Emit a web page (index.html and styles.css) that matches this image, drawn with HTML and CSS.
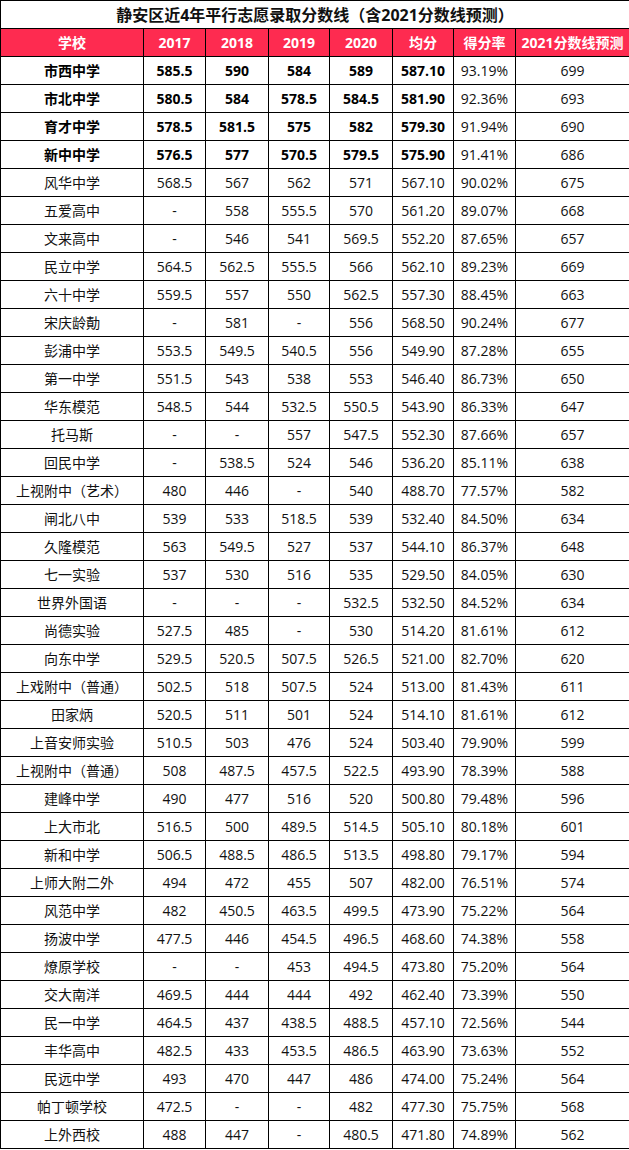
FILE: index.html
```html
<!DOCTYPE html>
<html lang="zh">
<head>
<meta charset="utf-8">
<title>静安区近4年平行志愿录取分数线</title>
<link rel="stylesheet" href="styles.css">
</head>
<body>
<table class="scores">
<colgroup>
<col class="c-school"><col class="c-y17"><col class="c-y18"><col class="c-y19"><col class="c-y20"><col class="c-avg"><col class="c-rate"><col class="c-pred">
</colgroup>
<thead>
<tr class="title-row"><th colspan="8">静安区近4年平行志愿录取分数线（含2021分数线预测）</th></tr>
<tr class="head-row"><th>学校</th><th>2017</th><th>2018</th><th>2019</th><th>2020</th><th>均分</th><th>得分率</th><th>2021分数线预测</th></tr>
</thead>
<tbody>
<tr class="top"><td>市西中学</td><td>585.5</td><td>590</td><td>584</td><td>589</td><td>587.10</td><td class="n">93.19%</td><td class="n">699</td></tr>
<tr class="top"><td>市北中学</td><td>580.5</td><td>584</td><td>578.5</td><td>584.5</td><td>581.90</td><td class="n">92.36%</td><td class="n">693</td></tr>
<tr class="top"><td>育才中学</td><td>578.5</td><td>581.5</td><td>575</td><td>582</td><td>579.30</td><td class="n">91.94%</td><td class="n">690</td></tr>
<tr class="top"><td>新中中学</td><td>576.5</td><td>577</td><td>570.5</td><td>579.5</td><td>575.90</td><td class="n">91.41%</td><td class="n">686</td></tr>
<tr><td>风华中学</td><td>568.5</td><td>567</td><td>562</td><td>571</td><td>567.10</td><td>90.02%</td><td>675</td></tr>
<tr><td>五爱高中</td><td>-</td><td>558</td><td>555.5</td><td>570</td><td>561.20</td><td>89.07%</td><td>668</td></tr>
<tr><td>文来高中</td><td>-</td><td>546</td><td>541</td><td>569.5</td><td>552.20</td><td>87.65%</td><td>657</td></tr>
<tr><td>民立中学</td><td>564.5</td><td>562.5</td><td>555.5</td><td>566</td><td>562.10</td><td>89.23%</td><td>669</td></tr>
<tr><td>六十中学</td><td>559.5</td><td>557</td><td>550</td><td>562.5</td><td>557.30</td><td>88.45%</td><td>663</td></tr>
<tr><td>宋庆龄勣</td><td>-</td><td>581</td><td>-</td><td>556</td><td>568.50</td><td>90.24%</td><td>677</td></tr>
<tr><td>彭浦中学</td><td>553.5</td><td>549.5</td><td>540.5</td><td>556</td><td>549.90</td><td>87.28%</td><td>655</td></tr>
<tr><td>第一中学</td><td>551.5</td><td>543</td><td>538</td><td>553</td><td>546.40</td><td>86.73%</td><td>650</td></tr>
<tr><td>华东模范</td><td>548.5</td><td>544</td><td>532.5</td><td>550.5</td><td>543.90</td><td>86.33%</td><td>647</td></tr>
<tr><td>托马斯</td><td>-</td><td>-</td><td>557</td><td>547.5</td><td>552.30</td><td>87.66%</td><td>657</td></tr>
<tr><td>回民中学</td><td>-</td><td>538.5</td><td>524</td><td>546</td><td>536.20</td><td>85.11%</td><td>638</td></tr>
<tr><td>上视附中（艺术）</td><td>480</td><td>446</td><td>-</td><td>540</td><td>488.70</td><td>77.57%</td><td>582</td></tr>
<tr><td>闸北八中</td><td>539</td><td>533</td><td>518.5</td><td>539</td><td>532.40</td><td>84.50%</td><td>634</td></tr>
<tr><td>久隆模范</td><td>563</td><td>549.5</td><td>527</td><td>537</td><td>544.10</td><td>86.37%</td><td>648</td></tr>
<tr><td>七一实验</td><td>537</td><td>530</td><td>516</td><td>535</td><td>529.50</td><td>84.05%</td><td>630</td></tr>
<tr><td>世界外国语</td><td>-</td><td>-</td><td>-</td><td>532.5</td><td>532.50</td><td>84.52%</td><td>634</td></tr>
<tr><td>尚德实验</td><td>527.5</td><td>485</td><td>-</td><td>530</td><td>514.20</td><td>81.61%</td><td>612</td></tr>
<tr><td>向东中学</td><td>529.5</td><td>520.5</td><td>507.5</td><td>526.5</td><td>521.00</td><td>82.70%</td><td>620</td></tr>
<tr><td>上戏附中（普通）</td><td>502.5</td><td>518</td><td>507.5</td><td>524</td><td>513.00</td><td>81.43%</td><td>611</td></tr>
<tr><td>田家炳</td><td>520.5</td><td>511</td><td>501</td><td>524</td><td>514.10</td><td>81.61%</td><td>612</td></tr>
<tr><td>上音安师实验</td><td>510.5</td><td>503</td><td>476</td><td>524</td><td>503.40</td><td>79.90%</td><td>599</td></tr>
<tr><td>上视附中（普通）</td><td>508</td><td>487.5</td><td>457.5</td><td>522.5</td><td>493.90</td><td>78.39%</td><td>588</td></tr>
<tr><td>建峰中学</td><td>490</td><td>477</td><td>516</td><td>520</td><td>500.80</td><td>79.48%</td><td>596</td></tr>
<tr><td>上大市北</td><td>516.5</td><td>500</td><td>489.5</td><td>514.5</td><td>505.10</td><td>80.18%</td><td>601</td></tr>
<tr><td>新和中学</td><td>506.5</td><td>488.5</td><td>486.5</td><td>513.5</td><td>498.80</td><td>79.17%</td><td>594</td></tr>
<tr><td>上师大附二外</td><td>494</td><td>472</td><td>455</td><td>507</td><td>482.00</td><td>76.51%</td><td>574</td></tr>
<tr><td>风范中学</td><td>482</td><td>450.5</td><td>463.5</td><td>499.5</td><td>473.90</td><td>75.22%</td><td>564</td></tr>
<tr><td>扬波中学</td><td>477.5</td><td>446</td><td>454.5</td><td>496.5</td><td>468.60</td><td>74.38%</td><td>558</td></tr>
<tr><td>燎原学校</td><td>-</td><td>-</td><td>453</td><td>494.5</td><td>473.80</td><td>75.20%</td><td>564</td></tr>
<tr><td>交大南洋</td><td>469.5</td><td>444</td><td>444</td><td>492</td><td>462.40</td><td>73.39%</td><td>550</td></tr>
<tr><td>民一中学</td><td>464.5</td><td>437</td><td>438.5</td><td>488.5</td><td>457.10</td><td>72.56%</td><td>544</td></tr>
<tr><td>丰华高中</td><td>482.5</td><td>433</td><td>453.5</td><td>486.5</td><td>463.90</td><td>73.63%</td><td>552</td></tr>
<tr><td>民远中学</td><td>493</td><td>470</td><td>447</td><td>486</td><td>474.00</td><td>75.24%</td><td>564</td></tr>
<tr><td>帕丁顿学校</td><td>472.5</td><td>-</td><td>-</td><td>482</td><td>477.30</td><td>75.75%</td><td>568</td></tr>
<tr><td>上外西校</td><td>488</td><td>447</td><td>-</td><td>480.5</td><td>471.80</td><td>74.89%</td><td>562</td></tr>
</tbody>
</table>
</body>
</html>
```
FILE: styles.css
```css
html, body {
  margin: 0;
  padding: 0;
  background: #ffffff;
}

body {
  font-family: "Open Sans", "Noto Sans CJK SC", sans-serif;
  color: #111111;
}

.scores {
  width: 629px;
  table-layout: fixed;
  border-collapse: collapse;
  font-size: 14px;
}

.c-school { width: 143px; }
.c-y17 { width: 62px; }
.c-y18 { width: 63px; }
.c-y19 { width: 61px; }
.c-y20 { width: 63px; }
.c-avg { width: 61px; }
.c-rate { width: 62px; }
.c-pred { width: 114px; }

.scores th,
.scores td {
  border: 1px solid #000000;
  height: 27px;
  padding: 0;
  text-align: center;
  vertical-align: middle;
  white-space: nowrap;
  line-height: 20px;
}

.title-row th {
  font-size: 16px;
  font-weight: 700;
  color: #111111;
  background: #ffffff;
}

.head-row th {
  background: #fe2b50;
  color: #ffffff;
  font-weight: 700;
  font-size: 14px;
}

.scores td {
  font-weight: 400;
}

.top td {
  font-weight: 700;
  color: #000000;
}

.top td.n {
  font-weight: 400;
  color: #111111;
}
```
